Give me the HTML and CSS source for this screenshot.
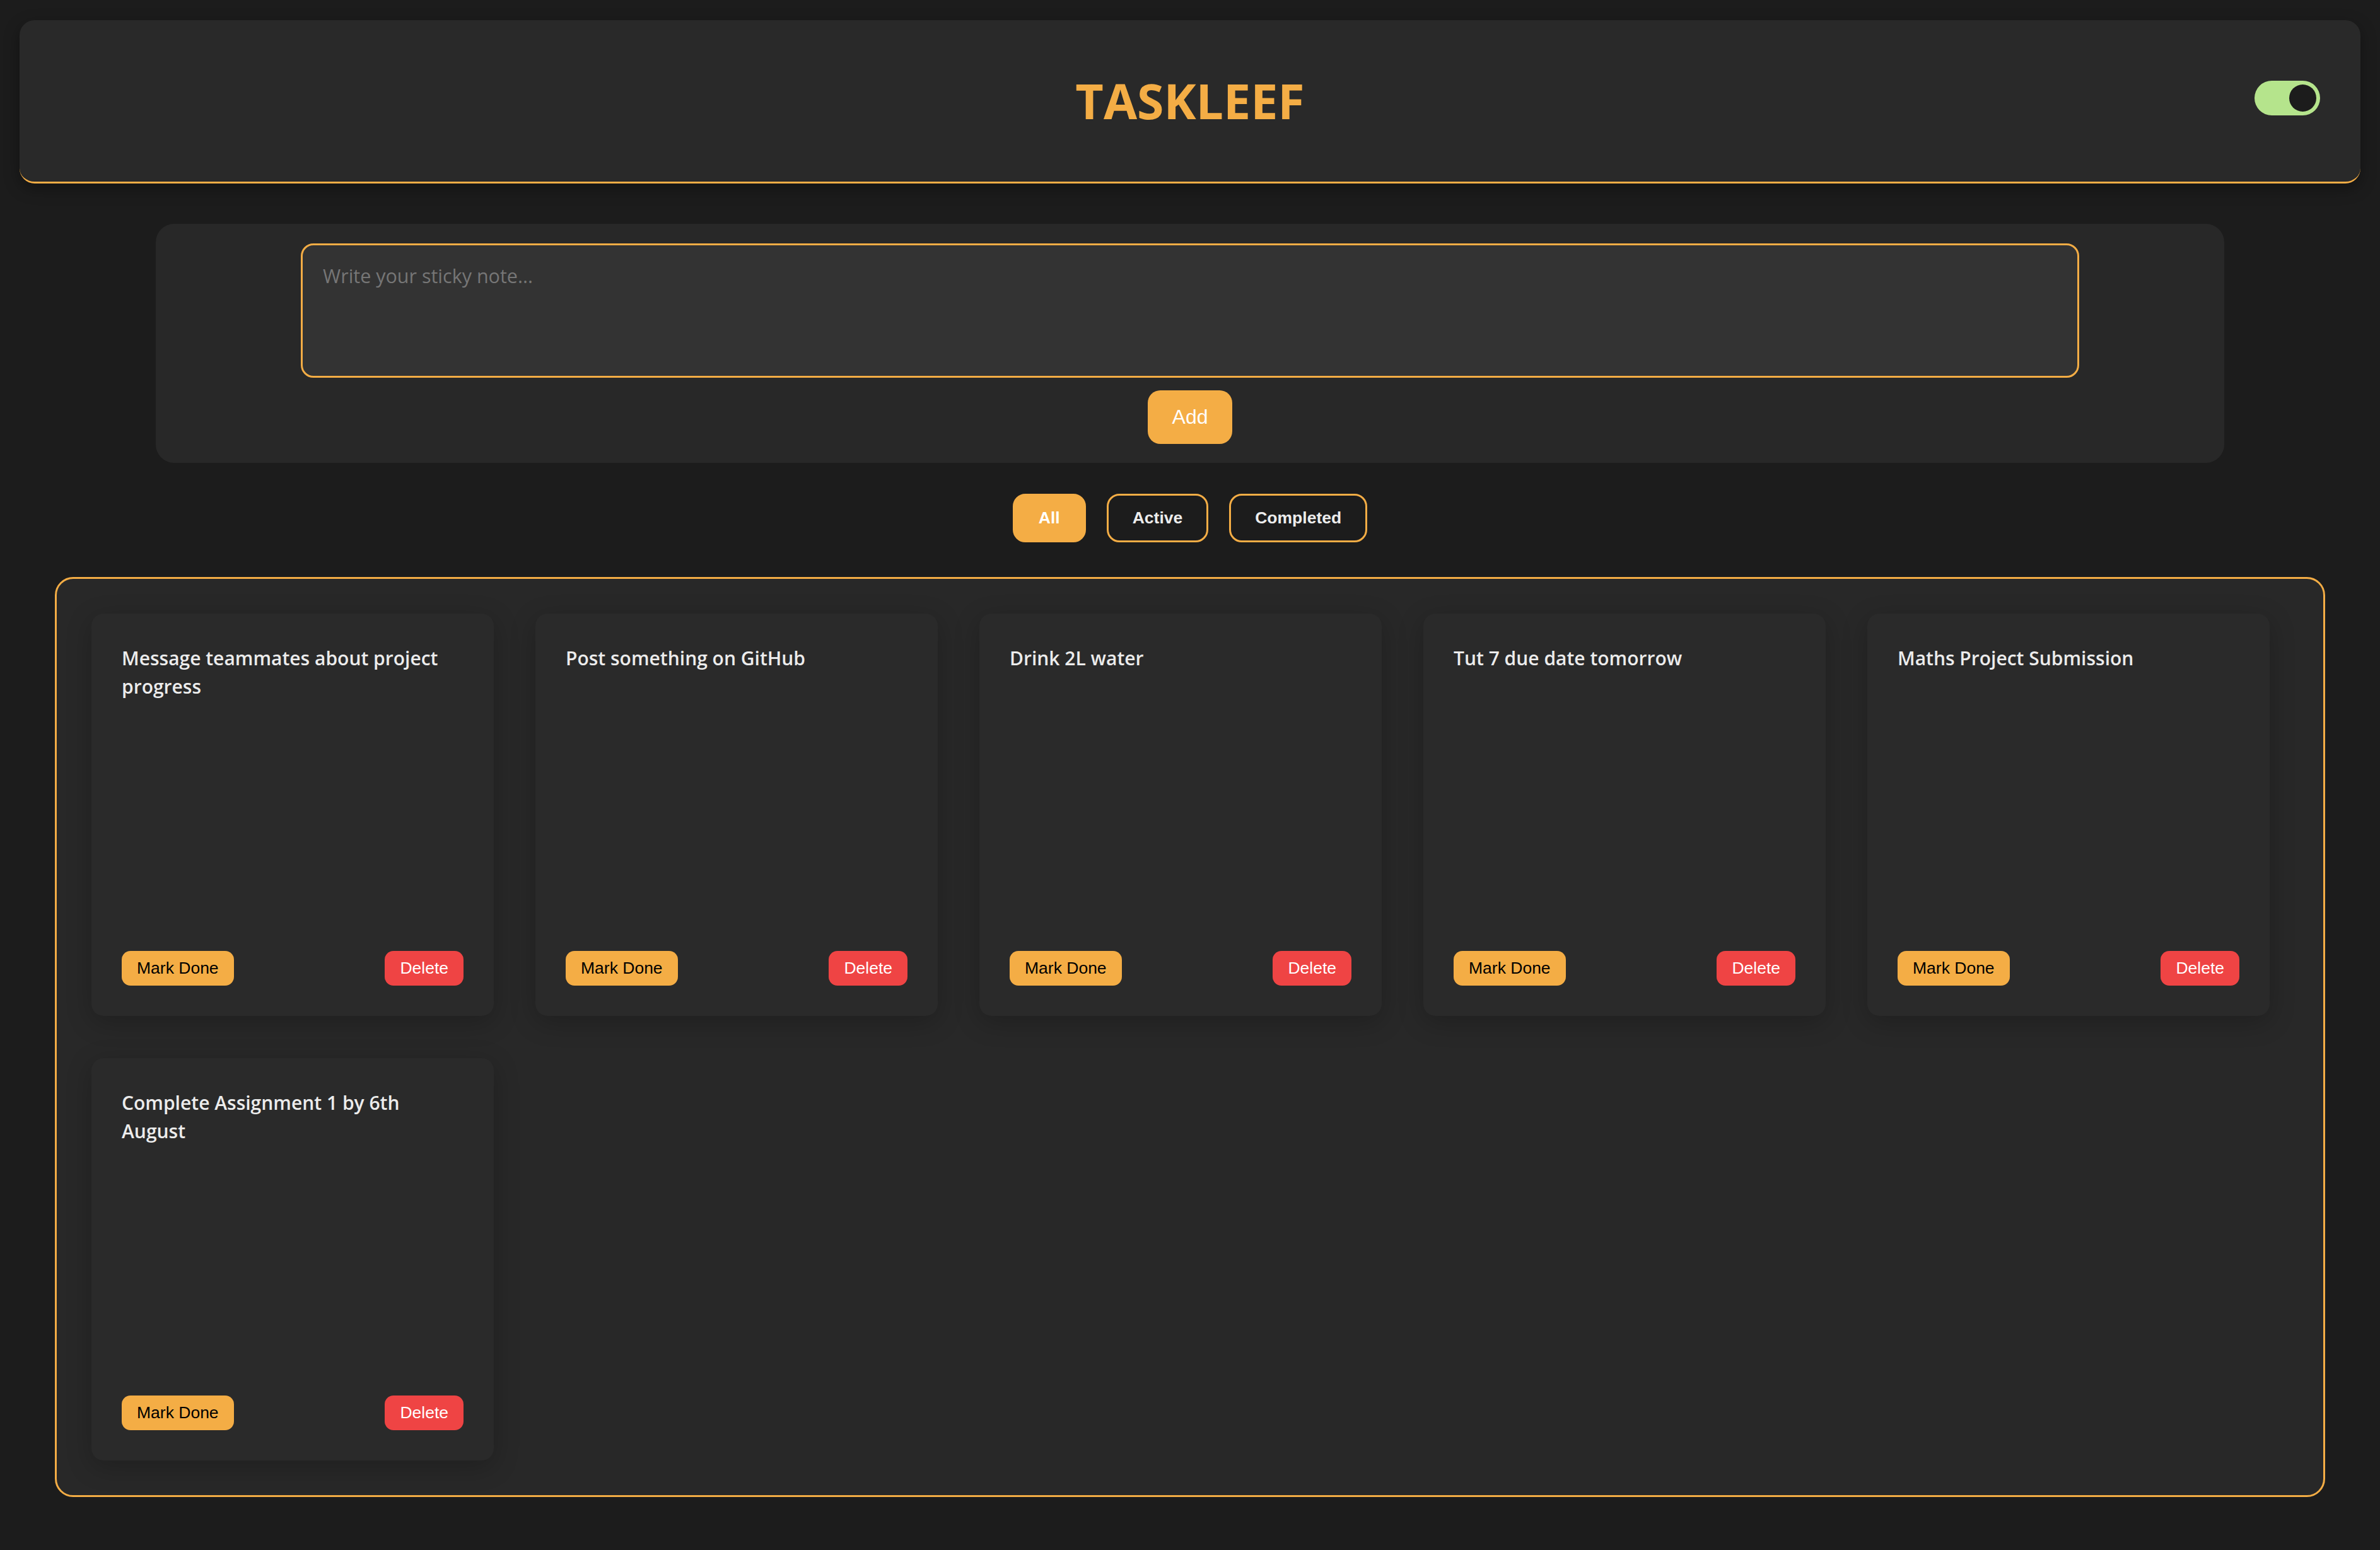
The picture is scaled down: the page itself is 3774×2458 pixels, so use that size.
FILE: index.html
```html
<!DOCTYPE html>
<html lang="en">
<head>
    <meta charset="UTF-8">
    <meta name="viewport" content="width=device-width, initial-scale=1.0">
    <title>Taskleef</title>
    <link rel="stylesheet" href="styles.css">
</head>
<body>
    <header class="top-bar">
        <div class="top-bar-side"></div>
        <h1>TASKLEEF</h1>
        <!-- theme switch -->
        <div class="theme-toggle">
            <span class="theme-knob"></span>
        </div>
    </header>

    <!-- new note -->
    <div class="note-form">
        <textarea class="note-input" placeholder="Write your sticky note..."></textarea>
        <button class="add-btn">Add</button>
    </div>

    <div class="filters">
        <button class="filter-btn active">All</button>
        <button class="filter-btn">Active</button>
        <button class="filter-btn">Completed</button>
    </div>

    <!-- notes -->
    <div class="notes-board">
        <div class="note">
            <p class="note-text">Message teammates about project progress</p>
            <div class="note-actions">
                <button class="done-btn">Mark Done</button>
                <button class="delete-btn">Delete</button>
            </div>
        </div>
        <div class="note">
            <p class="note-text">Post something on GitHub</p>
            <div class="note-actions">
                <button class="done-btn">Mark Done</button>
                <button class="delete-btn">Delete</button>
            </div>
        </div>
        <div class="note">
            <p class="note-text">Drink 2L water</p>
            <div class="note-actions">
                <button class="done-btn">Mark Done</button>
                <button class="delete-btn">Delete</button>
            </div>
        </div>
        <div class="note">
            <p class="note-text">Tut 7 due date tomorrow</p>
            <div class="note-actions">
                <button class="done-btn">Mark Done</button>
                <button class="delete-btn">Delete</button>
            </div>
        </div>
        <div class="note">
            <p class="note-text">Maths Project Submission</p>
            <div class="note-actions">
                <button class="done-btn">Mark Done</button>
                <button class="delete-btn">Delete</button>
            </div>
        </div>
        <div class="note">
            <p class="note-text">Complete Assignment 1 by 6th August</p>
            <div class="note-actions">
                <button class="done-btn">Mark Done</button>
                <button class="delete-btn">Delete</button>
            </div>
        </div>
    </div>
</body>
</html>
```

FILE: styles.css
```css
body {
    font-family: 'Open Sans', 'Noto Sans', sans-serif;
    background-color: #1c1c1c;
    margin: 0;
    padding: 32px 31px 85px;
}
.top-bar {
    display: grid;
    grid-template-columns: 1fr auto 1fr;
    padding: 82px 64px 82px;
    background-color: #292929;
    border-bottom: 3px solid #f4ad45;
    border-radius: 24px;
    box-shadow: 0 8px 24px rgba(0, 0, 0, 0.35);
}
.top-bar h1 {
    margin: 0;
    font-size: 77px;
    line-height: 92px;
    font-weight: 700;
    color: #f4ad45;
}
.theme-toggle {
    justify-self: end;
    align-self: start;
    margin-top: 14px;
    width: 104px;
    height: 55px;
    box-sizing: border-box;
    padding: 0 6px;
    border-radius: 28px;
    background-color: #b5e48c;
    display: flex;
    align-items: center;
    justify-content: flex-end;
}
.theme-knob {
    width: 43px;
    height: 43px;
    border-radius: 50%;
    background-color: #1c1c1c;
}
.note-form {
    width: 3280px;
    margin: 64px auto 0;
    padding: 31px 0 30px;
    background-color: #282828;
    border-radius: 29px;
    display: flex;
    flex-direction: column;
    align-items: center;
    gap: 20px;
}
.note-input {
    width: 2820px;
    height: 213px;
    box-sizing: border-box;
    padding: 27px 32px;
    background-color: #333333;
    border: 3px solid #f4ad45;
    border-radius: 20px;
    color: #e8e8e8;
    font-family: inherit;
    font-size: 30.5px;
    resize: none;
    outline: none;
}
.note-input::placeholder {
    color: #767676;
}
.add-btn {
    padding: 24px 39px;
    font-family: 'Liberation Sans', Arial, sans-serif;
    font-size: 32px;
    color: #fff;
    background-color: #f4ad45;
    border: none;
    border-radius: 20px;
}
.filters {
    display: flex;
    justify-content: center;
    gap: 33px;
    margin-top: 49px;
}
.filter-btn {
    padding: 20px 38px;
    font-family: 'Liberation Sans', Arial, sans-serif;
    font-size: 26.5px;
    font-weight: 700;
    color: #ececec;
    background-color: transparent;
    border: 3px solid #f4ad45;
    border-radius: 20px;
}
.filter-btn.active {
    background-color: #f4ad45;
    color: #fff;
}
.notes-board {
    margin: 55px 56px 0;
    padding: 55px;
    background-color: #282828;
    border: 3px solid #f4ad45;
    border-radius: 29px;
    display: grid;
    grid-template-columns: repeat(auto-fill, 638px);
    gap: 67px 66px;
}
.note {
    height: 638px;
    box-sizing: border-box;
    padding: 48px;
    background-color: #2a2a2a;
    border-radius: 19px;
    box-shadow: 0 10px 40px rgba(0, 0, 0, 0.22);
    display: flex;
    flex-direction: column;
    justify-content: space-between;
}
.note-text {
    margin: 0;
    font-size: 30px;
    line-height: 45px;
    font-weight: 600;
    color: #ececec;
}
.note-actions {
    display: flex;
    justify-content: space-between;
    align-items: flex-end;
}
.note-actions button {
    padding: 12px 24px;
    font-family: 'Liberation Sans', Arial, sans-serif;
    font-size: 26.5px;
    border: none;
    border-radius: 14px;
}
.done-btn {
    background-color: #f4ad45;
    color: #000;
}
.delete-btn {
    background-color: #ef4444;
    color: #fff;
}
```
